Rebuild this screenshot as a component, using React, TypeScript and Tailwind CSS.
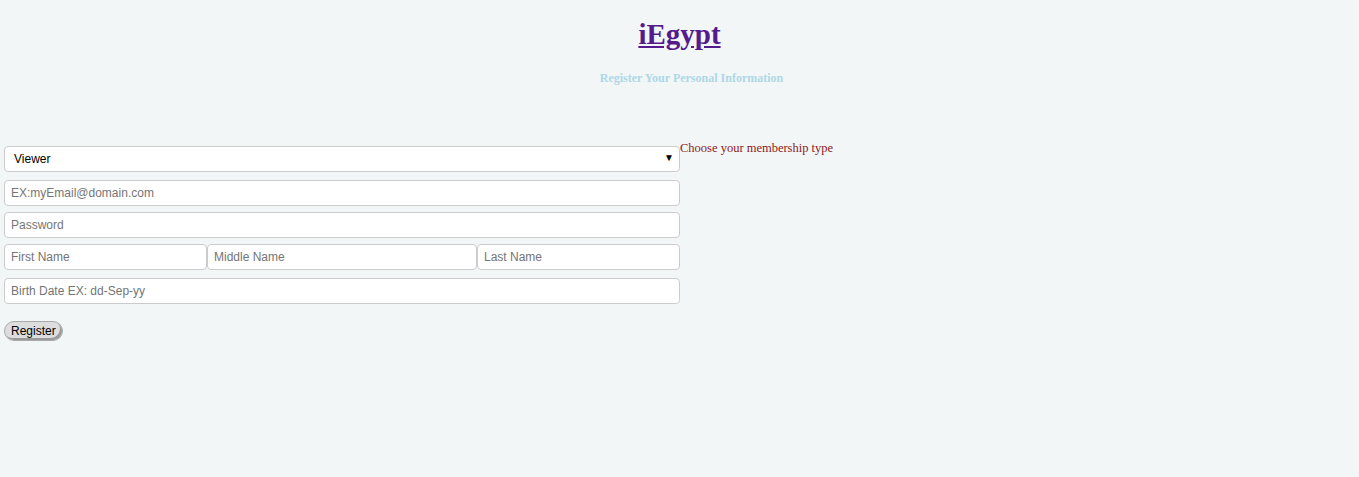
export default function App() {
  const inputCls =
    "h-[26px] w-full rounded-[4px] border border-[#cccccc] bg-white px-[6px] text-[12px] text-black placeholder:text-[#757575] outline-none";

  return (
    <div className="min-h-[477px] w-full bg-[#f3f6f7] font-['Liberation_Serif',serif]">
      {/* Header */}
      <div className="flex flex-col items-center pt-[16px]">
        <a href="#" className="text-[29px] font-bold leading-[36px] text-[#551a8b] underline">
          iEgypt
        </a>
        <h4 className="ml-[24px] mt-[19px] text-[12px] font-bold leading-[14px] text-[#add8e6]">
          Register Your Personal Information
        </h4>
      </div>

      {/* Form */}
      <div className="mt-[61px] flex items-start">
        <form className="ml-[4px] flex w-[676px] flex-col font-['Liberation_Sans',Arial,sans-serif]">
          <div className="relative">
            <select className="h-[26px] w-full appearance-none rounded-[4px] border border-[#cccccc] bg-white pl-[9px] text-[12px] text-black outline-none">
              <option>Viewer</option>
              <option>Contributor</option>
            </select>
            <span className="pointer-events-none absolute right-[6px] top-[4px] text-[10px] text-black">▼</span>
          </div>
          <input className={`mt-[8px] ${inputCls}`} placeholder="EX:myEmail@domain.com" />
          <input className={`mt-[6px] ${inputCls}`} type="password" placeholder="Password" />
          <div className="mt-[6px] flex">
            <input className={`!w-[203px] shrink-0 ${inputCls}`} placeholder="First Name" />
            <input className={`!w-[270px] shrink-0 ${inputCls}`} placeholder="Middle Name" />
            <input className={`!w-[203px] shrink-0 ${inputCls}`} placeholder="Last Name" />
          </div>
          <input className={`mt-[8px] ${inputCls}`} placeholder="Birth Date EX: dd-Sep-yy" />
          <div className="mt-[14px]">
            <button
              type="button"
              className="h-[20px] rounded-full border border-[#a9a9a9] bg-[#dddddd] px-[6px] text-[12px] leading-[16px] text-black shadow-[inset_-2px_-2px_0_#9a9a9a]"
            >
              Register
            </button>
          </div>
        </form>
        <label className="-mt-[6px] text-[12.5px] leading-[16px] text-[#8b1a1a]">
          Choose your membership type
        </label>
      </div>
    </div>
  );
}
